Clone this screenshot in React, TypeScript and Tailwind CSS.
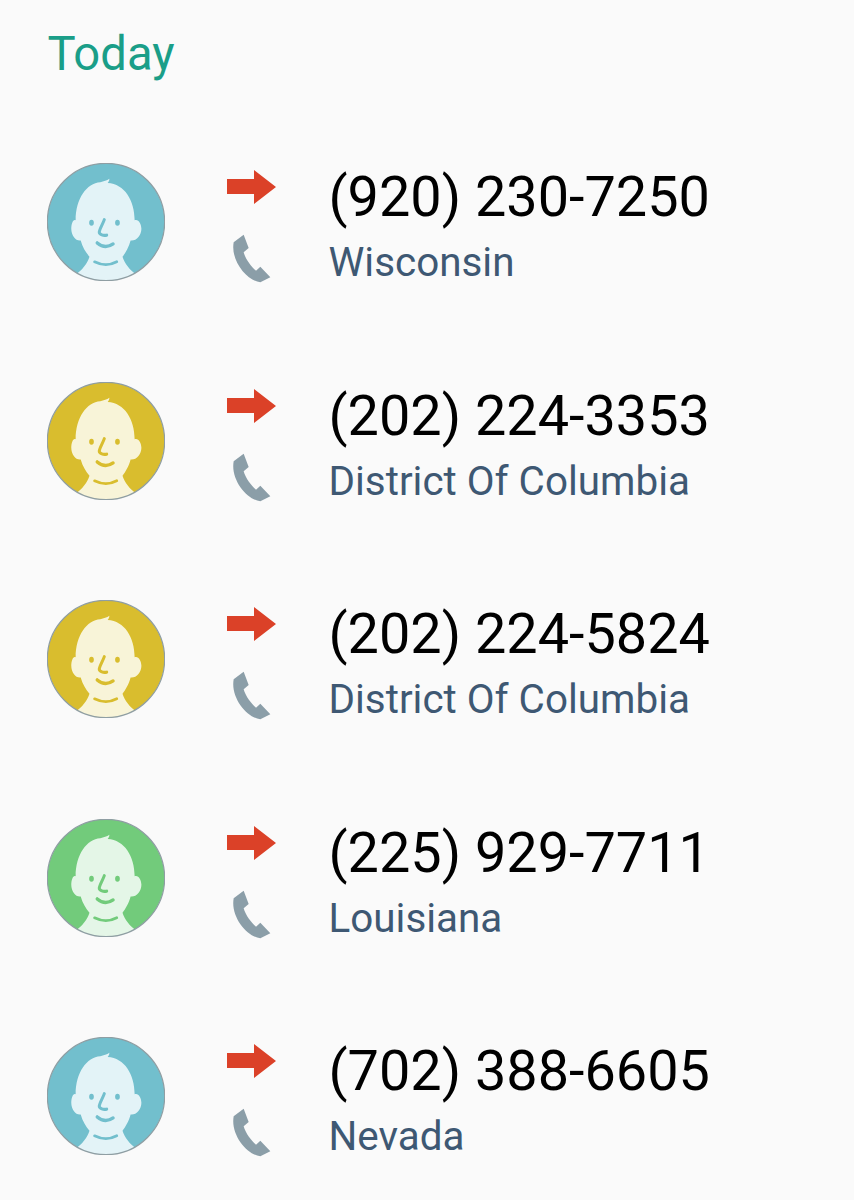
import { useId } from "react";

type Tone = { bg: string; light: string };

const blue: Tone = { bg: "#72bfcd", light: "#e3f3f7" };
const yellow: Tone = { bg: "#d9bd2e", light: "#f8f4d8" };
const green: Tone = { bg: "#72cb7b", light: "#e4f6e7" };

const calls = [
  { number: "(920) 230-7250", place: "Wisconsin", tone: blue },
  { number: "(202) 224-3353", place: "District Of Columbia", tone: yellow },
  { number: "(202) 224-5824", place: "District Of Columbia", tone: yellow },
  { number: "(225) 929-7711", place: "Louisiana", tone: green },
  { number: "(702) 388-6605", place: "Nevada", tone: blue },
];

function Avatar({ tone }: { tone: Tone }) {
  const clip = useId();
  return (
    <svg viewBox="0 0 350 350" className="w-[118px] h-[118px] shrink-0">
      <defs>
        <clipPath id={clip}>
          <circle cx="175" cy="175" r="174" />
        </clipPath>
      </defs>
      <circle cx="175" cy="175" r="174" fill={tone.bg} />
      <g clipPath={`url(#${clip})`}>
        <path
          fill={tone.light}
          d="M85 170C85 105 118 60 158 57C168 55 178 52 185 47C185 52 183 56 180 59C230 62 260 110 260 170C270 165 280 180 280 195C280 215 265 232 248 230C243 250 232 268 224 278C230 298 246 318 266 332L266 360L84 360L84 332C104 318 120 298 126 278C116 266 105 250 100 230C85 232 72 215 72 195C72 180 78 165 85 170Z"
        />
        <ellipse cx="132" cy="177" rx="7" ry="9" fill={tone.bg} />
        <ellipse cx="209" cy="177" rx="7" ry="9" fill={tone.bg} />
        <path d="M170 168C166 180 156 196 155 205C155 213 168 216 177 214" fill="none" stroke={tone.bg} strokeWidth="9" strokeLinecap="round" />
        <path d="M149 237Q172 257 196 240" fill="none" stroke={tone.bg} strokeWidth="10" strokeLinecap="round" />
        <path d="M141 293Q175 310 207 293" fill="none" stroke={tone.bg} strokeWidth="8" strokeLinecap="round" />
      </g>
      <circle cx="175" cy="175" r="174" fill="none" stroke="#8f9ea3" strokeWidth="3.5" />
    </svg>
  );
}

function OutgoingArrow() {
  return (
    <svg viewBox="0 0 50 34" className="w-[50px] h-[34px] block">
      <path d="M1 9H28V0L50 17L28 34V24H1Z" fill="#db4128" />
    </svg>
  );
}

function HandsetIcon() {
  return (
    <svg viewBox="50 217 120 150" className="w-[40px] h-[50px] block">
      <path
        d="M55 245L85 222L100 262L85 275C90 295 108 318 122 330L135 318L165 350L135 365C95 360 45 300 55 245Z"
        fill="#8b9ea8"
      />
    </svg>
  );
}

export default function App() {
  return (
    <div className="w-[854px] h-[1200px] overflow-hidden bg-[#fafafa] font-['Roboto',sans-serif]">
      <h2 className="pt-[26px] pl-[47.5px] h-[163px] text-[47.2px] leading-[56px] font-normal text-[#1a9e88]">Today</h2>
      {calls.map((call, i) => (
        <div key={i} className="flex items-start h-[218.6px] pl-[47px]">
          <Avatar tone={call.tone} />
          <div className="ml-[61px] w-[50px] pt-[7px] flex flex-col">
            <OutgoingArrow />
            <div className="mt-[29px] ml-[6px]">
              <HandsetIcon />
            </div>
          </div>
          <div className="ml-[52.5px] flex flex-col">
            <span className="text-[55.8px] leading-[66px] mt-[1px] text-black whitespace-nowrap">{call.number}</span>
            <span className="text-[40.4px] leading-[50px] mt-[8px] text-[#3e5873] whitespace-nowrap">{call.place}</span>
          </div>
        </div>
      ))}
    </div>
  );
}
